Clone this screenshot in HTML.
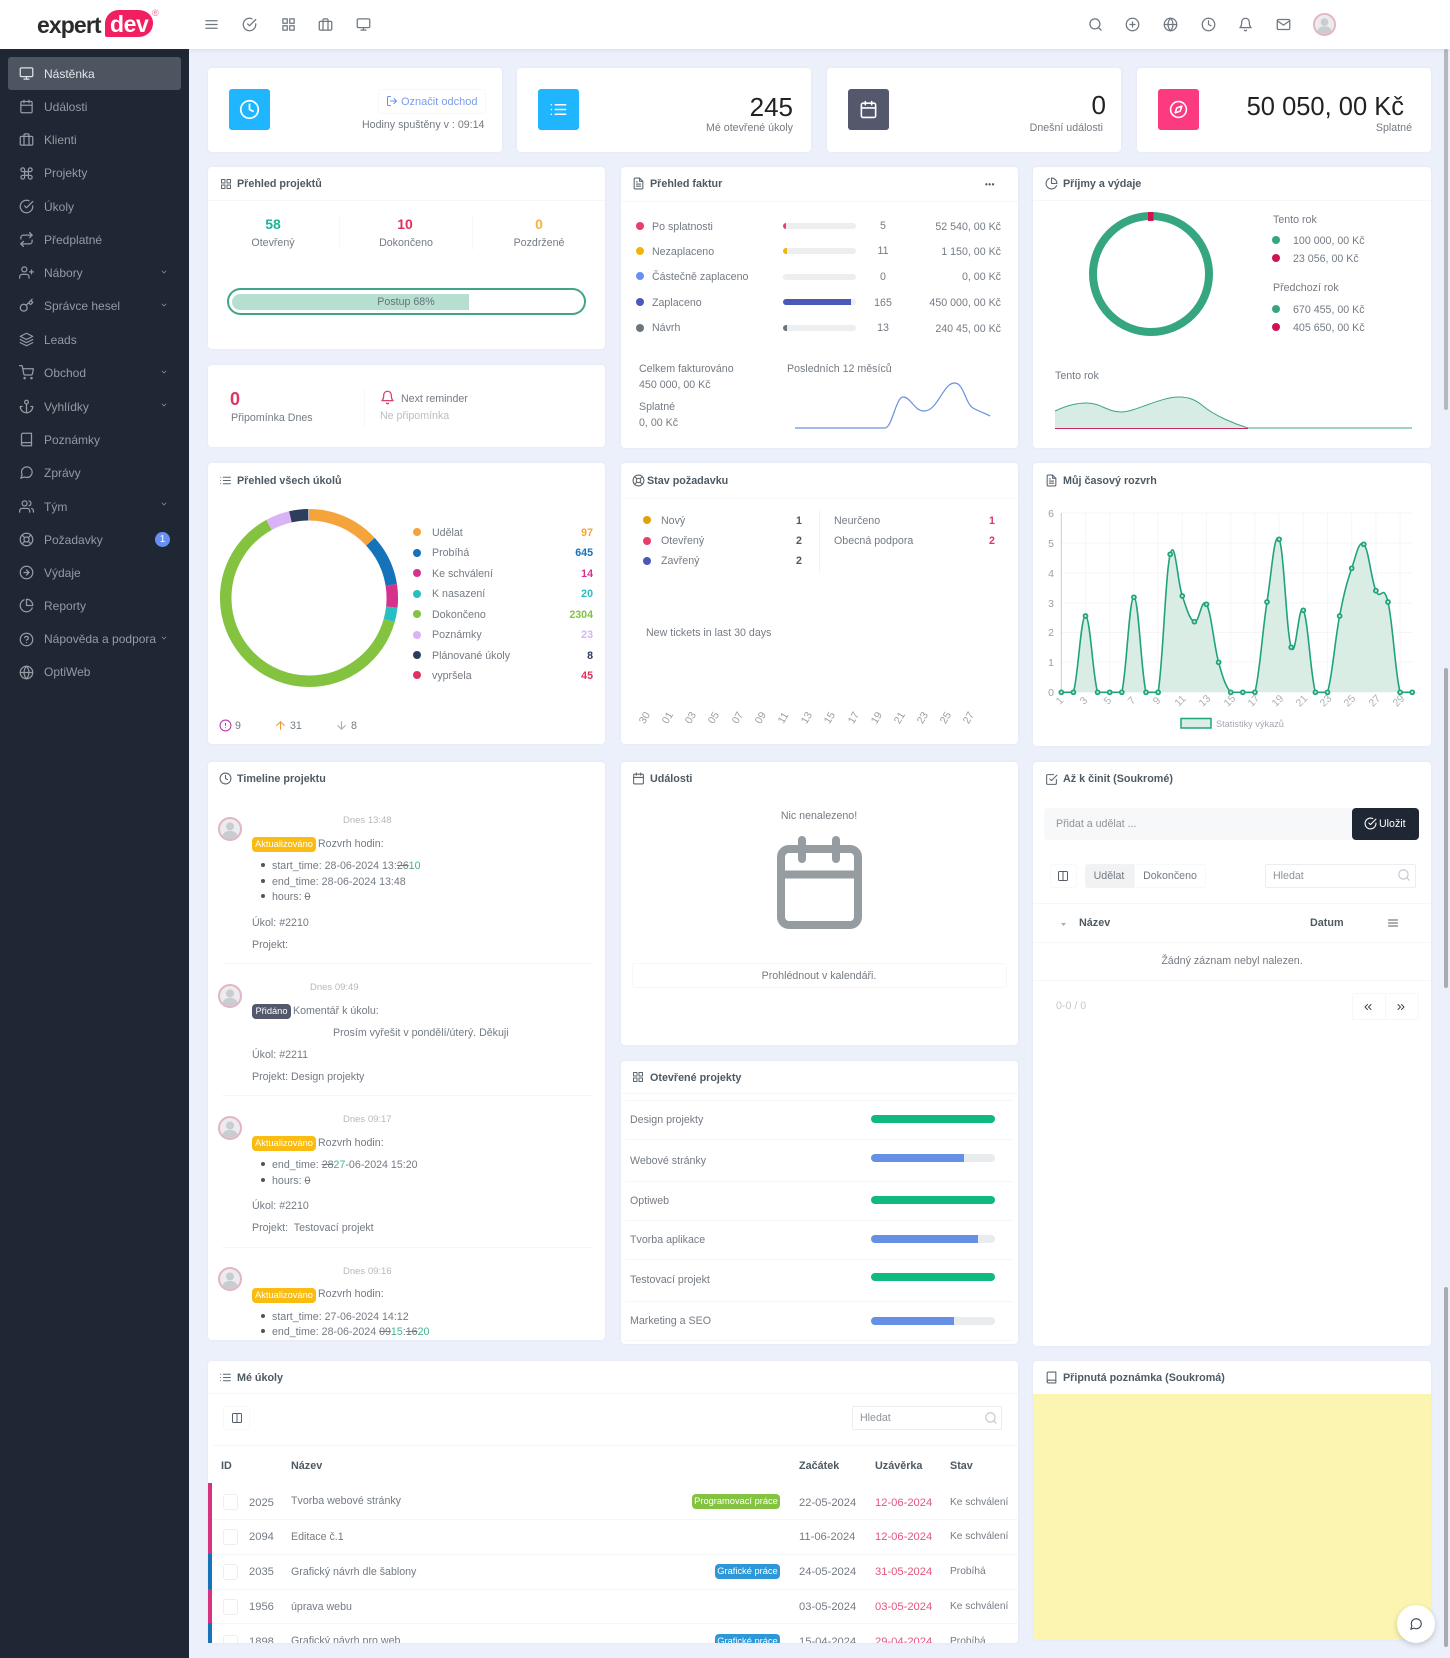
<!DOCTYPE html>
<html lang="cs"><head><meta charset="utf-8"><title>Nástěnka</title>
<style>
html,body{margin:0;padding:0}
body{width:1450px;height:1658px;overflow:hidden;position:relative;background:#ecf0fa;font-family:"Liberation Sans",Arial,sans-serif;font-size:10.65px;color:#747b83}
.a,.t,.i{position:absolute}
.t{white-space:nowrap;line-height:0;margin-top:1px}
.r{transform:translateX(-100%)}.c{transform:translateX(-50%)}
.i{fill:none;stroke:currentColor;stroke-width:2;stroke-linecap:round;stroke-linejoin:round;width:15px;height:15px}
.card{position:absolute;background:#fff;border-radius:4px;box-shadow:0 0 3px rgba(90,100,130,.06)}
.h{font-weight:bold;color:#4d5a63;font-size:10.75px}
.hl{position:absolute;height:1px;background:#f6f7f8}
.t.m{color:#959ba3;font-size:12px;margin-top:0}
.mi{color:#959ba3;width:15px;height:15px;left:19px}
.lb{font-size:10.65px}
b{font-weight:bold}
s{text-decoration:line-through}
.g{color:#45b48f}
.bd{position:absolute;border-radius:4px;color:#fff;font-size:9.3px;height:15px;line-height:15px;text-align:center;white-space:nowrap;margin-top:1px}
.d{position:absolute;border-radius:50%;width:8px;height:8px}
.bar{position:absolute;height:8px;border-radius:4px;background:#e9ecef;left:871px;width:124px;overflow:hidden}
.bar i{display:block;height:100%}
.tk{position:absolute;height:6px;width:73px;left:783px;border-radius:3px;background:#eceef0;overflow:hidden}
.tk i{display:block;height:100%}
.ax{position:absolute;color:#9a9ea3;font-size:10.5px;line-height:0;white-space:nowrap}
.ck{position:absolute;left:223px;width:15px;height:16px;box-sizing:border-box;border:1px solid #eceef0;border-radius:3px;background:#fff}
.n{font-size:11.2px}
.th{font-size:10.8px;color:#4d5a63}
.k{font-size:10.2px}
</style></head><body>
<svg width="0" height="0" style="position:absolute"><defs>
<symbol id="menu" viewBox="0 0 24 24"><path d="M3 12h18M3 6h18M3 18h18"/></symbol>
<symbol id="check" viewBox="0 0 24 24"><path d="M22 11.08V12a10 10 0 1 1-5.93-9.14"/><path d="M22 4 12 14.01l-3-3"/></symbol>
<symbol id="grid" viewBox="0 0 24 24"><rect x="3" y="3" width="7" height="7"/><rect x="14" y="3" width="7" height="7"/><rect x="14" y="14" width="7" height="7"/><rect x="3" y="14" width="7" height="7"/></symbol>
<symbol id="brief" viewBox="0 0 24 24"><rect x="2" y="7" width="20" height="14" rx="2"/><path d="M16 21V5a2 2 0 0 0-2-2h-4a2 2 0 0 0-2 2v16"/></symbol>
<symbol id="monitor" viewBox="0 0 24 24"><rect x="2" y="3" width="20" height="14" rx="2"/><path d="M8 21h8M12 17v4"/></symbol>
<symbol id="cal" viewBox="0 0 24 24"><rect x="3" y="4" width="18" height="18" rx="2"/><path d="M16 2v4M8 2v4M3 10h18"/></symbol>
<symbol id="cmd" viewBox="0 0 24 24"><path d="M18 3a3 3 0 0 0-3 3v12a3 3 0 0 0 3 3 3 3 0 0 0 3-3 3 3 0 0 0-3-3H6a3 3 0 0 0-3 3 3 3 0 0 0 3 3 3 3 0 0 0 3-3V6a3 3 0 0 0-3-3 3 3 0 0 0-3 3 3 3 0 0 0 3 3h12a3 3 0 0 0 3-3 3 3 0 0 0-3-3z"/></symbol>
<symbol id="repeat" viewBox="0 0 24 24"><path d="M17 1l4 4-4 4"/><path d="M3 11V9a4 4 0 0 1 4-4h14"/><path d="M7 23l-4-4 4-4"/><path d="M21 13v2a4 4 0 0 1-4 4H3"/></symbol>
<symbol id="userp" viewBox="0 0 24 24"><path d="M16 21v-2a4 4 0 0 0-4-4H5a4 4 0 0 0-4 4v2"/><circle cx="8.5" cy="7" r="4"/><path d="M20 8v6M23 11h-6"/></symbol>
<symbol id="key" viewBox="0 0 24 24"><path d="M21 2l-2 2m-7.61 7.61a5.5 5.5 0 1 1-7.778 7.778 5.5 5.5 0 0 1 7.777-7.777zm0 0L15.5 7.5m0 0l3 3L22 7l-3-3m-3.5 3.5L19 4"/></symbol>
<symbol id="layers" viewBox="0 0 24 24"><path d="M12 2 2 7l10 5 10-5-10-5z"/><path d="M2 17l10 5 10-5"/><path d="M2 12l10 5 10-5"/></symbol>
<symbol id="cart" viewBox="0 0 24 24"><circle cx="9" cy="21" r="1"/><circle cx="20" cy="21" r="1"/><path d="M1 1h4l2.68 13.39a2 2 0 0 0 2 1.61h9.72a2 2 0 0 0 2-1.61L23 6H6"/></symbol>
<symbol id="anchor" viewBox="0 0 24 24"><circle cx="12" cy="5" r="3"/><path d="M12 22V8"/><path d="M5 12H2a10 10 0 0 0 20 0h-3"/></symbol>
<symbol id="book" viewBox="0 0 24 24"><path d="M4 19.5A2.5 2.5 0 0 1 6.5 17H20"/><path d="M6.5 2H20v20H6.5A2.5 2.5 0 0 1 4 19.5v-15A2.5 2.5 0 0 1 6.5 2z"/></symbol>
<symbol id="msg" viewBox="0 0 24 24"><path d="M21 11.5a8.38 8.38 0 0 1-.9 3.8 8.5 8.5 0 0 1-7.6 4.7 8.38 8.38 0 0 1-3.8-.9L3 21l1.9-5.7a8.38 8.38 0 0 1-.9-3.8 8.5 8.5 0 0 1 4.7-7.6 8.38 8.38 0 0 1 3.8-.9h.5a8.48 8.48 0 0 1 8 8v.5z"/></symbol>
<symbol id="users" viewBox="0 0 24 24"><path d="M17 21v-2a4 4 0 0 0-4-4H5a4 4 0 0 0-4 4v2"/><circle cx="9" cy="7" r="4"/><path d="M23 21v-2a4 4 0 0 0-3-3.87"/><path d="M16 3.13a4 4 0 0 1 0 7.75"/></symbol>
<symbol id="buoy" viewBox="0 0 24 24"><circle cx="12" cy="12" r="10"/><circle cx="12" cy="12" r="4"/><path d="M4.93 4.93l4.24 4.24M14.83 14.83l4.24 4.24M14.83 9.17l4.24-4.24M4.93 19.07l4.24-4.24"/></symbol>
<symbol id="arrc" viewBox="0 0 24 24"><circle cx="12" cy="12" r="10"/><path d="M12 16l4-4-4-4M8 12h8"/></symbol>
<symbol id="pie" viewBox="0 0 24 24"><path d="M21.21 15.89A10 10 0 1 1 8 2.83"/><path d="M22 12A10 10 0 0 0 12 2v10z"/></symbol>
<symbol id="help" viewBox="0 0 24 24"><circle cx="12" cy="12" r="10"/><path d="M9.09 9a3 3 0 0 1 5.83 1c0 2-3 3-3 3M12 17h.01"/></symbol>
<symbol id="globe" viewBox="0 0 24 24"><circle cx="12" cy="12" r="10"/><path d="M2 12h20"/><path d="M12 2a15.3 15.3 0 0 1 4 10 15.3 15.3 0 0 1-4 10 15.3 15.3 0 0 1-4-10 15.3 15.3 0 0 1 4-10z"/></symbol>
<symbol id="search" viewBox="0 0 24 24"><circle cx="11" cy="11" r="8"/><path d="M21 21l-4.35-4.35"/></symbol>
<symbol id="plusc" viewBox="0 0 24 24"><circle cx="12" cy="12" r="10"/><path d="M12 8v8M8 12h8"/></symbol>
<symbol id="clock" viewBox="0 0 24 24"><circle cx="12" cy="12" r="10"/><path d="M12 6v6l4 2"/></symbol>
<symbol id="bell" viewBox="0 0 24 24"><path d="M18 8A6 6 0 0 0 6 8c0 7-3 9-3 9h18s-3-2-3-9"/><path d="M13.73 21a2 2 0 0 1-3.46 0"/></symbol>
<symbol id="mail" viewBox="0 0 24 24"><path d="M4 4h16c1.1 0 2 .9 2 2v12c0 1.1-.9 2-2 2H4c-1.1 0-2-.9-2-2V6c0-1.1.9-2 2-2z"/><path d="M22 6l-10 7L2 6"/></symbol>
<symbol id="list" viewBox="0 0 24 24"><path d="M8 6h13M8 12h13M8 18h13M3 6h.01M3 12h.01M3 18h.01"/></symbol>
<symbol id="file" viewBox="0 0 24 24"><path d="M14 2H6a2 2 0 0 0-2 2v16a2 2 0 0 0 2 2h12a2 2 0 0 0 2-2V8z"/><path d="M14 2v6h6M16 13H8M16 17H8M10 9H8"/></symbol>
<symbol id="compass" viewBox="0 0 24 24"><circle cx="12" cy="12" r="10"/><path d="M16.24 7.76l-2.12 6.36-6.36 2.12 2.12-6.36 6.36-2.12z"/></symbol>
<symbol id="logout" viewBox="0 0 24 24"><path d="M9 21H5a2 2 0 0 1-2-2V5a2 2 0 0 1 2-2h4"/><path d="M16 17l5-5-5-5M21 12H9"/></symbol>
<symbol id="cols" viewBox="0 0 24 24"><path d="M12 3h7a2 2 0 0 1 2 2v14a2 2 0 0 1-2 2h-7m0-18H5a2 2 0 0 0-2 2v14a2 2 0 0 0 2 2h7m0-18v18"/></symbol>
<symbol id="checks" viewBox="0 0 24 24"><path d="M9 11l3 3L22 4"/><path d="M21 12v7a2 2 0 0 1-2 2H5a2 2 0 0 1-2-2V5a2 2 0 0 1 2-2h11"/></symbol>
<symbol id="alert" viewBox="0 0 24 24"><circle cx="12" cy="12" r="10"/><path d="M12 8v4M12 16h.01"/></symbol>
<symbol id="up" viewBox="0 0 24 24"><path d="M12 19V5M5 12l7-7 7 7"/></symbol>
<symbol id="down" viewBox="0 0 24 24"><path d="M12 5v14M19 12l-7 7-7-7"/></symbol>
<symbol id="chev" viewBox="0 0 24 24"><path d="M6 9l6 6 6-6"/></symbol>
<symbol id="chl" viewBox="0 0 24 24"><path d="M11 17l-5-5 5-5M18 17l-5-5 5-5"/></symbol>
<symbol id="chr" viewBox="0 0 24 24"><path d="M13 17l5-5-5-5M6 17l5-5-5-5"/></symbol>
<symbol id="ava" viewBox="0 0 24 24"><circle cx="12" cy="12" r="11" fill="#ececef" stroke="#e3b4c3" stroke-width="2"/><circle cx="12" cy="9.5" r="4" fill="#c9ccd0" stroke="none"/><path d="M4.5 19c1-4 4-5 7.5-5s6.5 1 7.5 5a11 11 0 0 1-15 0z" fill="#c9ccd0" stroke="none"/></symbol>
</defs></svg>

<!-- header -->
<div class="a" style="left:0;top:0;width:1450px;height:49px;background:#fff;box-shadow:0 1px 4px rgba(60,70,100,.12);z-index:3"></div>
<div class="a" style="z-index:4;left:0;top:0;width:1450px;height:49px">
<svg class="a" style="left:104px;top:9px" width="50" height="30"><path d="M15 1H34C43 1 49 7 49 14C49 22 43 28 34 28H3Q1 28 1 26V15C1 7 7 1 15 1Z" fill="#f01f5f"/></svg>
<span class="t" style="left:37px;top:24px;font-size:23px;font-weight:bold;color:#2b2b2e;letter-spacing:-.9px">expert</span>
<span class="t" style="left:110px;top:23px;font-size:23px;font-weight:bold;color:#fff;letter-spacing:-.4px">dev</span>
<span class="t" style="left:152px;top:12px;font-size:9px;color:#f2668f">®</span>
<svg class="i" style="left:204px;top:17px;color:#6f777f"><use href="#menu"/></svg>
<svg class="i" style="left:242px;top:17px;color:#6f777f"><use href="#check"/></svg>
<svg class="i" style="left:281px;top:17px;color:#6f777f"><use href="#grid"/></svg>
<svg class="i" style="left:318px;top:17px;color:#6f777f"><use href="#brief"/></svg>
<svg class="i" style="left:356px;top:17px;color:#6f777f"><use href="#monitor"/></svg>
<svg class="i" style="left:1088px;top:17px;color:#6f777f"><use href="#search"/></svg>
<svg class="i" style="left:1125px;top:17px;color:#6f777f"><use href="#plusc"/></svg>
<svg class="i" style="left:1163px;top:17px;color:#6f777f"><use href="#globe"/></svg>
<svg class="i" style="left:1201px;top:17px;color:#6f777f"><use href="#clock"/></svg>
<svg class="i" style="left:1238px;top:17px;color:#6f777f"><use href="#bell"/></svg>
<svg class="i" style="left:1276px;top:17px;color:#6f777f"><use href="#mail"/></svg>
<svg class="i" style="left:1313px;top:13px;width:23px;height:23px"><use href="#ava"/></svg>
</div>

<!-- sidebar -->
<div class="a" style="left:0;top:49px;width:189px;height:1609px;background:#1f2734;z-index:2">
<div class="a" style="left:8px;top:8px;width:173px;height:33px;background:#4d5560;border-radius:3px"></div>
</div>
<div class="a" style="left:0;top:0;z-index:3;width:189px;height:1658px">
<svg class="i mi" style="top:66px;color:#dfe2e6"><use href="#monitor"/></svg><span class="t m" style="left:44px;top:74px;color:#e3e6ea">Nástěnka</span>
<svg class="i mi" style="top:99px"><use href="#cal"/></svg><span class="t m" style="left:44px;top:107px">Události</span>
<svg class="i mi" style="top:132px"><use href="#brief"/></svg><span class="t m" style="left:44px;top:140px">Klienti</span>
<svg class="i mi" style="top:166px"><use href="#cmd"/></svg><span class="t m" style="left:44px;top:173px">Projekty</span>
<svg class="i mi" style="top:199px"><use href="#check"/></svg><span class="t m" style="left:44px;top:207px">Úkoly</span>
<svg class="i mi" style="top:232px"><use href="#repeat"/></svg><span class="t m" style="left:44px;top:240px">Předplatné</span>
<svg class="i mi" style="top:265px"><use href="#userp"/></svg><span class="t m" style="left:44px;top:273px">Nábory</span>
<svg class="i mi" style="top:298px"><use href="#key"/></svg><span class="t m" style="left:44px;top:306px">Správce hesel</span>
<svg class="i mi" style="top:332px"><use href="#layers"/></svg><span class="t m" style="left:44px;top:340px">Leads</span>
<svg class="i mi" style="top:365px"><use href="#cart"/></svg><span class="t m" style="left:44px;top:373px">Obchod</span>
<svg class="i mi" style="top:399px"><use href="#anchor"/></svg><span class="t m" style="left:44px;top:407px">Vyhlídky</span>
<svg class="i mi" style="top:432px"><use href="#book"/></svg><span class="t m" style="left:44px;top:440px">Poznámky</span>
<svg class="i mi" style="top:465px"><use href="#msg"/></svg><span class="t m" style="left:44px;top:473px">Zprávy</span>
<svg class="i mi" style="top:499px"><use href="#users"/></svg><span class="t m" style="left:44px;top:507px">Tým</span>
<svg class="i mi" style="top:532px"><use href="#buoy"/></svg><span class="t m" style="left:44px;top:540px">Požadavky</span>
<svg class="i mi" style="top:565px"><use href="#arrc"/></svg><span class="t m" style="left:44px;top:573px">Výdaje</span>
<svg class="i mi" style="top:598px"><use href="#pie"/></svg><span class="t m" style="left:44px;top:606px">Reporty</span>
<svg class="i mi" style="top:632px"><use href="#help"/></svg><span class="t m" style="left:44px;top:639px">Nápověda a podpora</span>
<svg class="i mi" style="top:665px"><use href="#globe"/></svg><span class="t m" style="left:44px;top:672px">OptiWeb</span>
<svg class="i" style="left:160px;top:268px;width:8px;height:8px;color:#959ba3"><use href="#chev"/></svg>
<svg class="i" style="left:160px;top:301px;width:8px;height:8px;color:#959ba3"><use href="#chev"/></svg>
<svg class="i" style="left:160px;top:368px;width:8px;height:8px;color:#959ba3"><use href="#chev"/></svg>
<svg class="i" style="left:160px;top:401px;width:8px;height:8px;color:#959ba3"><use href="#chev"/></svg>
<svg class="i" style="left:160px;top:500px;width:8px;height:8px;color:#959ba3"><use href="#chev"/></svg>
<svg class="i" style="left:160px;top:634px;width:8px;height:8px;color:#959ba3"><use href="#chev"/></svg>
<div class="a" style="left:155px;top:532px;width:15px;height:15px;border-radius:50%;background:#6690f4;color:#fff;font-size:10px;line-height:15px;text-align:center">1</div>
</div>

<!-- cards -->
<div class="card" style="left:208px;top:68px;width:294px;height:84px"></div>
<div class="card" style="left:517px;top:68px;width:294px;height:84px"></div>
<div class="card" style="left:827px;top:68px;width:294px;height:84px"></div>
<div class="card" style="left:1137px;top:68px;width:294px;height:84px"></div>
<div class="card" style="left:208px;top:167px;width:397px;height:182px"></div>
<div class="card" style="left:208px;top:365px;width:397px;height:82px"></div>
<div class="card" style="left:621px;top:167px;width:397px;height:281px"></div>
<div class="card" style="left:1033px;top:167px;width:398px;height:281px"></div>
<div class="card" style="left:208px;top:463px;width:397px;height:281px"></div>
<div class="card" style="left:621px;top:463px;width:397px;height:281px"></div>
<div class="card" style="left:1033px;top:463px;width:398px;height:283px"></div>
<div class="card" style="left:208px;top:762px;width:397px;height:578px"></div>
<div class="card" style="left:621px;top:762px;width:397px;height:283px"></div>
<div class="card" style="left:621px;top:1061px;width:397px;height:283px"></div>
<div class="card" style="left:1033px;top:762px;width:398px;height:584px"></div>
<div class="card" style="left:208px;top:1361px;width:810px;height:282px"></div>
<div class="card" style="left:1033px;top:1361px;width:398px;height:279px;overflow:hidden"><div class="a" style="left:0;top:33px;width:398px;height:246px;background:#fcf4b1"></div></div>

<!-- scrollbars -->
<div class="a" style="left:1444px;top:49px;width:4px;height:361px;background:#b5b7bc;border-radius:2px"></div>
<div class="a" style="left:1444px;top:668px;width:4px;height:320px;background:#a9abb0;border-radius:2px"></div>
<div class="a" style="left:1444px;top:1287px;width:4px;height:360px;background:#a9abb0;border-radius:2px"></div>

<!-- top cards -->
<div class="a" style="left:229px;top:89px;width:41px;height:41px;background:#1fb6ff;border-radius:3px"></div>
<svg class="i" style="left:239px;top:99px;width:21px;height:21px;color:#fff"><use href="#clock"/></svg>
<div class="a" style="left:378px;top:89px;width:108px;height:25px;border:1px solid #f6f7f8;box-sizing:border-box;border-radius:3px"></div>
<svg class="i" style="left:386px;top:95px;width:12px;height:12px;color:#6a90e8"><use href="#logout"/></svg>
<span class="t" style="left:401px;top:101px;color:#7d9ce8;font-size:11px">Označit odchod</span>
<span class="t" style="left:362px;top:124px">Hodiny spuštěny v : 09:14</span>

<div class="a" style="left:538px;top:89px;width:41px;height:41px;background:#1fb6ff;border-radius:3px"></div>
<svg class="i" style="left:549px;top:100px;width:19px;height:19px;color:#fff"><use href="#list"/></svg>
<span class="t r" style="left:793px;top:106px;font-size:26px;color:#222">245</span>
<span class="t r" style="left:793px;top:127px">Mé otevřené úkoly</span>

<div class="a" style="left:848px;top:89px;width:41px;height:41px;background:#54586c;border-radius:3px"></div>
<svg class="i" style="left:859px;top:100px;width:19px;height:19px;color:#fff"><use href="#cal"/></svg>
<span class="t r" style="left:1106px;top:104px;font-size:26px;color:#222">0</span>
<span class="t r" style="left:1103px;top:127px">Dnešní události</span>

<div class="a" style="left:1158px;top:89px;width:41px;height:41px;background:#fb3a7f;border-radius:3px"></div>
<svg class="i" style="left:1169px;top:100px;width:19px;height:19px;color:#fff"><use href="#compass"/></svg>
<span class="t r" style="left:1404px;top:106px;font-size:25.5px;color:#222">50 050, 00 Kč</span>
<span class="t r" style="left:1412px;top:127px">Splatné</span>

<!-- project overview -->
<svg class="i" style="left:220px;top:178px;width:12px;height:12px;color:#5c6770"><use href="#grid"/></svg>
<span class="t h" style="left:237px;top:183px">Přehled projektů</span>
<div class="hl" style="left:208px;top:200px;width:397px"></div>
<span class="t c" style="left:273px;top:223px;font-size:14px;font-weight:bold;color:#1fb594">58</span>
<span class="t c" style="left:273px;top:242px">Otevřený</span>
<span class="t c" style="left:405px;top:223px;font-size:14px;font-weight:bold;color:#dc2f5f">10</span>
<span class="t c" style="left:406px;top:242px">Dokončeno</span>
<span class="t c" style="left:539px;top:223px;font-size:14px;font-weight:bold;color:#f5b23c">0</span>
<span class="t c" style="left:539px;top:242px">Pozdržené</span>
<div class="a" style="left:339px;top:216px;width:1px;height:34px;background:#f7f8f9"></div>
<div class="a" style="left:472px;top:216px;width:1px;height:34px;background:#f7f8f9"></div>
<div class="a" style="left:227px;top:288px;width:359px;height:27px;box-sizing:border-box;border:2px solid #3fa584;border-radius:14px"></div>
<div class="a" style="left:232px;top:294px;width:237px;height:16px;background:#b6dfcf;border-radius:8px 0 0 8px"></div>
<span class="t c" style="left:406px;top:301px;color:#66727a">Postup 68%</span>

<!-- reminder -->
<span class="t" style="left:230px;top:398px;font-size:18px;font-weight:bold;color:#dc3464">0</span>
<span class="t" style="left:231px;top:417px">Připomínka Dnes</span>
<div class="a" style="left:364px;top:388px;width:1px;height:40px;background:#f7f8f9"></div>
<svg class="i" style="left:380px;top:390px;width:15px;height:15px;color:#dc3f6d"><use href="#bell"/></svg>
<span class="t" style="left:401px;top:398px">Next reminder</span>
<span class="t" style="left:380px;top:415px;color:#b9bdc2">Ne připomínka</span>

<!-- invoices -->
<svg class="i" style="left:632px;top:177px;width:13px;height:13px;color:#5c6770"><use href="#file"/></svg>
<span class="t h" style="left:650px;top:183px">Přehled faktur</span>
<span class="t" style="left:985px;top:184px;font-weight:bold;font-size:8px;letter-spacing:.5px;color:#4d5a63">•••</span>
<div class="hl" style="left:621px;top:201px;width:397px"></div>
<div class="d" style="left:636px;top:222px;background:#e83e6c"></div><span class="t lb" style="left:652px;top:226px">Po splatnosti</span>
<div class="d" style="left:636px;top:247px;background:#f1b40f"></div><span class="t lb" style="left:652px;top:251px">Nezaplaceno</span>
<div class="d" style="left:636px;top:272px;background:#6690f4"></div><span class="t lb" style="left:652px;top:276px">Částečně zaplaceno</span>
<div class="d" style="left:636px;top:298px;background:#4a58b8"></div><span class="t lb" style="left:652px;top:302px">Zaplaceno</span>
<div class="d" style="left:636px;top:324px;background:#6c757d"></div><span class="t lb" style="left:652px;top:327px">Návrh</span>
<div class="tk" style="top:223px"><i style="width:3px;background:#e83e6c"></i></div>
<div class="tk" style="top:248px"><i style="width:4px;background:#f1b40f"></i></div>
<div class="tk" style="top:274px"></div>
<div class="tk" style="top:299px"><i style="width:68px;background:#4a58b8"></i></div>
<div class="tk" style="top:325px"><i style="width:4px;background:#6c757d"></i></div>
<span class="t c" style="left:883px;top:225px">5</span>
<span class="t c" style="left:883px;top:250px">11</span>
<span class="t c" style="left:883px;top:276px">0</span>
<span class="t c" style="left:883px;top:302px">165</span>
<span class="t c" style="left:883px;top:327px">13</span>
<span class="t r" style="left:1001px;top:226px">52 540, 00 Kč</span>
<span class="t r" style="left:1001px;top:251px">1 150, 00 Kč</span>
<span class="t r" style="left:1001px;top:276px">0, 00 Kč</span>
<span class="t r" style="left:1001px;top:302px">450 000, 00 Kč</span>
<span class="t r" style="left:1001px;top:328px">240 45, 00 Kč</span>
<span class="t" style="left:639px;top:368px">Celkem fakturováno</span>
<span class="t" style="left:639px;top:384px">450 000, 00 Kč</span>
<span class="t" style="left:639px;top:406px">Splatné</span>
<span class="t" style="left:639px;top:422px">0, 00 Kč</span>
<span class="t" style="left:787px;top:368px">Posledních 12 měsíců</span>

<!-- income -->
<svg class="i" style="left:1045px;top:177px;width:13px;height:13px;color:#5c6770"><use href="#pie"/></svg>
<span class="t h" style="left:1063px;top:183px">Příjmy a výdaje</span>
<div class="hl" style="left:1033px;top:200px;width:398px"></div>
<span class="t" style="left:1273px;top:219px">Tento rok</span>
<div class="d" style="left:1272px;top:236px;background:#36a581"></div><span class="t" style="left:1293px;top:240px">100 000, 00 Kč</span>
<div class="d" style="left:1272px;top:254px;background:#d1134f"></div><span class="t" style="left:1293px;top:258px">23 056, 00 Kč</span>
<span class="t" style="left:1273px;top:287px">Předchozí rok</span>
<div class="d" style="left:1272px;top:305px;background:#36a581"></div><span class="t" style="left:1293px;top:309px">670 455, 00 Kč</span>
<div class="d" style="left:1272px;top:323px;background:#d1134f"></div><span class="t" style="left:1293px;top:327px">405 650, 00 Kč</span>
<span class="t" style="left:1055px;top:375px">Tento rok</span>

<!-- overall charts -->
<svg class="a" style="left:0;top:0" width="1450" height="1658" viewBox="0 0 1450 1658" fill="none">
 <path d="M795 428H885C892 428 896 397 903 397C911 397 914 411 924 411C938 411 943 383 954.5 383C964 383 965 403 973 408C980 412 985 413 990 416" stroke="#6a90e0" stroke-width="1.2"/>
 <circle cx="1151" cy="274" r="58" stroke="#36a581" stroke-width="8"/>
 <rect x="1148" y="212" width="5.5" height="9" fill="#d1134f"/>
 <path d="M1055 411C1068 405 1077 403 1087 403C1100 403 1108 412 1121 412C1135 412 1160 397 1179 397C1189 397 1196 400 1203 406C1215 416 1235 424 1248 428H1055Z" fill="#d7ece4"/>
 <path d="M1055 411C1068 405 1077 403 1087 403C1100 403 1108 412 1121 412C1135 412 1160 397 1179 397C1189 397 1196 400 1203 406C1215 416 1235 424 1248 428H1412" stroke="#3fa583" stroke-width="1"/>
 <path d="M1055 428.5H1248" stroke="#c8285a" stroke-width="1"/>
 <!-- tasks donut -->
 <g transform="rotate(-90 309 598)" stroke-width="11.5">
  <circle cx="309" cy="598" r="83.3" pathLength="360" stroke="#f5a33b" stroke-dasharray="47.6 360"/>
  <circle cx="309" cy="598" r="83.3" pathLength="360" stroke="#1672b9" stroke-dasharray="33.4 360" stroke-dashoffset="-47.6"/>
  <circle cx="309" cy="598" r="83.3" pathLength="360" stroke="#d6328c" stroke-dasharray="15.4 360" stroke-dashoffset="-81"/>
  <circle cx="309" cy="598" r="83.3" pathLength="360" stroke="#27bfc4" stroke-dasharray="9.4 360" stroke-dashoffset="-96.4"/>
  <circle cx="309" cy="598" r="83.3" pathLength="360" stroke="#83c340" stroke-dasharray="225.9 360" stroke-dashoffset="-105.8"/>
  <circle cx="309" cy="598" r="83.3" pathLength="360" stroke="#d9b3f5" stroke-dasharray="15.8 360" stroke-dashoffset="-331.7"/>
  <circle cx="309" cy="598" r="83.3" pathLength="360" stroke="#2c3e5c" stroke-dasharray="12.5 360" stroke-dashoffset="-347.5"/>
 </g>
 <!-- timesheet grid -->
 <path d="M1061 513H1412M1061 543H1412M1061 573H1412M1061 603H1412M1061 632.5H1412M1061 662H1412" stroke="#f5f5f6"/>
 <path d="M1085.5 513V692M1109.7 513V692M1133.9 513V692M1158.1 513V692M1182.3 513V692M1206.5 513V692M1230.7 513V692M1254.9 513V692M1279.1 513V692M1303.3 513V692M1327.5 513V692M1351.7 513V692M1375.9 513V692M1400.1 513V692" stroke="#f6f6f7"/>
 <path d="M1061.3 513V692.3" stroke="#c9cbce"/>
 <g transform="translate(1061.3 692.3)">
  <path d="M0 0L12.1 0C16.9 -15.3 19.4 -76.3 24.2 -76.3C29 -76.3 31.5 -15.3 36.3 0L60.5 0C65.3 -19 67.8 -95 72.6 -95C77.4 -95 79.9 -19 84.7 0L96.8 0C101.6 -27.6 104.1 -118.7 108.9 -138C113.7 -157.3 116.2 -109.8 121 -96.3C125.8 -82.8 128.3 -72.3 133.1 -70.6C137.9 -68.9 140.4 -96.1 145.2 -88C150 -79.9 152.5 -47.6 157.3 -30C162.1 -12.4 164.6 -6 169.4 0L193.6 0C198.4 -18 200.9 -59.7 205.7 -90.3C210.5 -120.9 213 -162 217.8 -153C222.6 -144 225.1 -59.2 229.9 -45C234.7 -30.8 237.2 -91 242 -82C246.8 -73 249.3 -16.4 254.1 0L266.2 0C271 -15.3 273.5 -51.5 278.3 -76.3C283.1 -101.1 285.6 -109.7 290.4 -124C295.2 -138.3 297.7 -152.5 302.5 -148C307.3 -143.5 309.8 -113.1 314.6 -101.6C319.4 -90.1 321.9 -110.6 326.7 -90.3C331.5 -70 334 -18 338.8 0L350.9 0" fill="#d9ede5" stroke="#1fa37c" stroke-width="1.6"/>
  <g fill="#c6e5d9" stroke="#1fa37c" stroke-width="1.7">
  <circle cx="0" cy="0" r="2"/><circle cx="12.1" cy="0" r="2"/><circle cx="24.2" cy="-76.3" r="2"/><circle cx="36.3" cy="0" r="2"/><circle cx="48.4" cy="0" r="2"/><circle cx="60.5" cy="0" r="2"/><circle cx="72.6" cy="-95" r="2"/><circle cx="84.7" cy="0" r="2"/><circle cx="96.8" cy="0" r="2"/><circle cx="108.9" cy="-138" r="2"/><circle cx="121" cy="-96.3" r="2"/><circle cx="133.1" cy="-70.6" r="2"/><circle cx="145.2" cy="-88" r="2"/><circle cx="157.3" cy="-30" r="2"/><circle cx="169.4" cy="0" r="2"/><circle cx="181.5" cy="0" r="2"/><circle cx="193.6" cy="0" r="2"/><circle cx="205.7" cy="-90.3" r="2"/><circle cx="217.8" cy="-153" r="2"/><circle cx="229.9" cy="-45" r="2"/><circle cx="242" cy="-82" r="2"/><circle cx="254.1" cy="0" r="2"/><circle cx="266.2" cy="0" r="2"/><circle cx="278.3" cy="-76.3" r="2"/><circle cx="290.4" cy="-124" r="2"/><circle cx="302.5" cy="-148" r="2"/><circle cx="314.6" cy="-101.6" r="2"/><circle cx="326.7" cy="-90.3" r="2"/><circle cx="338.8" cy="0" r="2"/><circle cx="350.9" cy="0" r="2"/>
  </g>
 </g>
 <rect x="1181" y="718.5" width="30" height="9.5" fill="#d9ede5" stroke="#1fa37c" stroke-width="1.5"/>
</svg>

<!-- tasks overview -->
<svg class="i" style="left:219px;top:474px;width:13px;height:13px;color:#5c6770"><use href="#list"/></svg>
<span class="t h" style="left:237px;top:480px">Přehled všech úkolů</span>
<div class="d" style="left:413px;top:528px;background:#f5a33b"></div><span class="t lb" style="left:432px;top:532px">Udělat</span><b class="t r" style="left:593px;top:532px;color:#f5a33b">97</b>
<div class="d" style="left:413px;top:549px;background:#1672b9"></div><span class="t lb" style="left:432px;top:552px">Probíhá</span><b class="t r" style="left:593px;top:552px;color:#1672b9">645</b>
<div class="d" style="left:413px;top:569px;background:#d6328c"></div><span class="t lb" style="left:432px;top:573px">Ke schválení</span><b class="t r" style="left:593px;top:573px;color:#d6328c">14</b>
<div class="d" style="left:413px;top:590px;background:#27bfc4"></div><span class="t lb" style="left:432px;top:593px">K nasazení</span><b class="t r" style="left:593px;top:593px;color:#27bfc4">20</b>
<div class="d" style="left:413px;top:610px;background:#83c340"></div><span class="t lb" style="left:432px;top:614px">Dokončeno</span><b class="t r" style="left:593px;top:614px;color:#83c340">2304</b>
<div class="d" style="left:413px;top:631px;background:#d9b3f5"></div><span class="t lb" style="left:432px;top:634px">Poznámky</span><b class="t r" style="left:593px;top:634px;color:#d9b3f5">23</b>
<div class="d" style="left:413px;top:651px;background:#2c3e5c"></div><span class="t lb" style="left:432px;top:655px">Plánované úkoly</span><b class="t r" style="left:593px;top:655px;color:#2c3e5c">8</b>
<div class="d" style="left:413px;top:671px;background:#e2305f"></div><span class="t lb" style="left:432px;top:675px">vypršela</span><b class="t r" style="left:593px;top:675px;color:#e2305f">45</b>
<svg class="i" style="left:219px;top:719px;width:13px;height:13px;color:#b83aa8"><use href="#alert"/></svg><span class="t" style="left:235px;top:725px">9</span>
<svg class="i" style="left:274px;top:719px;width:13px;height:13px;color:#f0982e"><use href="#up"/></svg><span class="t" style="left:290px;top:725px">31</span>
<svg class="i" style="left:335px;top:719px;width:13px;height:13px;color:#a8adb3"><use href="#down"/></svg><span class="t" style="left:351px;top:725px">8</span>

<!-- tickets -->
<svg class="i" style="left:632px;top:474px;width:13px;height:13px;color:#5c6770"><use href="#buoy"/></svg>
<span class="t h" style="left:647px;top:480px">Stav požadavku</span>
<div class="hl" style="left:621px;top:498px;width:397px;background:#f9fafb"></div>
<div class="d" style="left:643px;top:516px;background:#dfa20a"></div><span class="t lb" style="left:661px;top:520px">Nový</span><b class="t c" style="left:799px;top:520px;color:#4d5a63">1</b>
<div class="d" style="left:643px;top:537px;background:#e83e6c"></div><span class="t lb" style="left:661px;top:540px">Otevřený</span><b class="t c" style="left:799px;top:540px;color:#4d5a63">2</b>
<div class="d" style="left:643px;top:557px;background:#4a58b8"></div><span class="t lb" style="left:661px;top:560px">Zavřený</span><b class="t c" style="left:799px;top:560px;color:#4d5a63">2</b>
<div class="a" style="left:819px;top:510px;width:1px;height:62px;background:#f2f3f5"></div>
<span class="t lb" style="left:834px;top:520px">Neurčeno</span><b class="t c" style="left:992px;top:520px;color:#dc3464">1</b>
<span class="t lb" style="left:834px;top:540px">Obecná podpora</span><b class="t c" style="left:992px;top:540px;color:#dc3464">2</b>
<span class="t lb" style="left:646px;top:632px">New tickets in last 30 days</span>
<span class="ax" style="left:639px;top:718px;transform:rotate(-60deg)">30</span><span class="ax" style="left:662px;top:718px;transform:rotate(-60deg)">01</span><span class="ax" style="left:685px;top:718px;transform:rotate(-60deg)">03</span><span class="ax" style="left:708px;top:718px;transform:rotate(-60deg)">05</span><span class="ax" style="left:732px;top:718px;transform:rotate(-60deg)">07</span><span class="ax" style="left:755px;top:718px;transform:rotate(-60deg)">09</span><span class="ax" style="left:778px;top:718px;transform:rotate(-60deg)">11</span><span class="ax" style="left:801px;top:718px;transform:rotate(-60deg)">13</span><span class="ax" style="left:824px;top:718px;transform:rotate(-60deg)">15</span><span class="ax" style="left:848px;top:718px;transform:rotate(-60deg)">17</span><span class="ax" style="left:871px;top:718px;transform:rotate(-60deg)">19</span><span class="ax" style="left:894px;top:718px;transform:rotate(-60deg)">21</span><span class="ax" style="left:917px;top:718px;transform:rotate(-60deg)">23</span><span class="ax" style="left:940px;top:718px;transform:rotate(-60deg)">25</span><span class="ax" style="left:963px;top:718px;transform:rotate(-60deg)">27</span>

<!-- timesheet -->
<svg class="i" style="left:1045px;top:474px;width:13px;height:13px;color:#5c6770"><use href="#file"/></svg>
<span class="t h" style="left:1063px;top:480px">Můj časový rozvrh</span>
<span class="ax c" style="left:1051px;top:514px">6</span><span class="ax c" style="left:1051px;top:544px">5</span><span class="ax c" style="left:1051px;top:574px">4</span><span class="ax c" style="left:1051px;top:604px">3</span><span class="ax c" style="left:1051px;top:633px">2</span><span class="ax c" style="left:1051px;top:663px">1</span><span class="ax c" style="left:1051px;top:693px">0</span>
<span class="ax" style="left:1057px;top:701px;transform:rotate(-45deg);color:#aeb2b6">1</span><span class="ax" style="left:1081px;top:701px;transform:rotate(-45deg);color:#aeb2b6">3</span><span class="ax" style="left:1105px;top:701px;transform:rotate(-45deg);color:#aeb2b6">5</span><span class="ax" style="left:1129px;top:701px;transform:rotate(-45deg);color:#aeb2b6">7</span><span class="ax" style="left:1154px;top:701px;transform:rotate(-45deg);color:#aeb2b6">9</span><span class="ax" style="left:1175px;top:701px;transform:rotate(-45deg);color:#aeb2b6">11</span><span class="ax" style="left:1199px;top:701px;transform:rotate(-45deg);color:#aeb2b6">13</span><span class="ax" style="left:1224px;top:701px;transform:rotate(-45deg);color:#aeb2b6">15</span><span class="ax" style="left:1248px;top:701px;transform:rotate(-45deg);color:#aeb2b6">17</span><span class="ax" style="left:1272px;top:701px;transform:rotate(-45deg);color:#aeb2b6">19</span><span class="ax" style="left:1296px;top:701px;transform:rotate(-45deg);color:#aeb2b6">21</span><span class="ax" style="left:1320px;top:701px;transform:rotate(-45deg);color:#aeb2b6">23</span><span class="ax" style="left:1344px;top:701px;transform:rotate(-45deg);color:#aeb2b6">25</span><span class="ax" style="left:1369px;top:701px;transform:rotate(-45deg);color:#aeb2b6">27</span><span class="ax" style="left:1393px;top:701px;transform:rotate(-45deg);color:#aeb2b6">29</span>
<span class="t" style="left:1216px;top:723px;font-size:9.2px;color:#a4a8b0">Statistiky výkazů</span>

<!-- timeline -->
<svg class="i" style="left:219px;top:772px;width:13px;height:13px;color:#5c6770"><use href="#clock"/></svg>
<span class="t h" style="left:237px;top:778px">Timeline projektu</span>
<div class="a" style="left:0;top:0;width:610px;height:1339px;overflow:hidden">
<svg class="i" style="left:218px;top:817px;width:24px;height:24px"><use href="#ava"/></svg>
<span class="t" style="left:343px;top:820px;font-size:9.5px;color:#b4b8bd">Dnes 13:48</span>
<div class="bd" style="left:252px;top:836px;width:64px;background:#fbbc12">Aktualizováno</div><span class="t" style="left:318px;top:843px">Rozvrh hodin:</span>
<div class="d" style="left:261px;top:863px;width:4px;height:4px;background:#555"></div><span class="t" style="left:272px;top:865px">start_time: 28-06-2024 13:<s>26</s><span class="g">10</span></span>
<div class="d" style="left:261px;top:879px;width:4px;height:4px;background:#555"></div><span class="t" style="left:272px;top:881px">end_time: 28-06-2024 13:48</span>
<div class="d" style="left:261px;top:894px;width:4px;height:4px;background:#555"></div><span class="t" style="left:272px;top:896px">hours: <s>0</s></span>
<span class="t" style="left:252px;top:922px">Úkol: #2210</span>
<span class="t" style="left:252px;top:944px">Projekt:</span>
<div class="hl" style="left:222px;top:963px;width:370px"></div>

<svg class="i" style="left:218px;top:984px;width:24px;height:24px"><use href="#ava"/></svg>
<span class="t" style="left:310px;top:987px;font-size:9.5px;color:#b4b8bd">Dnes 09:49</span>
<div class="bd" style="left:252px;top:1003px;width:39px;background:#54586c">Přidáno</div><span class="t" style="left:293px;top:1010px">Komentář k úkolu:</span>
<span class="t" style="left:333px;top:1032px">Prosím vyřešit v pondělí/úterý. Děkuji</span>
<span class="t" style="left:252px;top:1054px">Úkol: #2211</span>
<span class="t" style="left:252px;top:1076px">Projekt: Design projekty</span>
<div class="hl" style="left:222px;top:1095px;width:370px"></div>

<svg class="i" style="left:218px;top:1116px;width:24px;height:24px"><use href="#ava"/></svg>
<span class="t" style="left:343px;top:1119px;font-size:9.5px;color:#b4b8bd">Dnes 09:17</span>
<div class="bd" style="left:252px;top:1135px;width:64px;background:#fbbc12">Aktualizováno</div><span class="t" style="left:318px;top:1142px">Rozvrh hodin:</span>
<div class="d" style="left:261px;top:1162px;width:4px;height:4px;background:#555"></div><span class="t" style="left:272px;top:1164px">end_time: <s>28</s><span class="g">27</span>-06-2024 15:20</span>
<div class="d" style="left:261px;top:1178px;width:4px;height:4px;background:#555"></div><span class="t" style="left:272px;top:1180px">hours: <s>0</s></span>
<span class="t" style="left:252px;top:1205px">Úkol: #2210</span>
<span class="t" style="left:252px;top:1227px">Projekt:&nbsp; Testovací projekt</span>
<div class="hl" style="left:222px;top:1247px;width:370px"></div>

<svg class="i" style="left:218px;top:1267px;width:24px;height:24px"><use href="#ava"/></svg>
<span class="t" style="left:343px;top:1271px;font-size:9.5px;color:#b4b8bd">Dnes 09:16</span>
<div class="bd" style="left:252px;top:1287px;width:64px;background:#fbbc12">Aktualizováno</div><span class="t" style="left:318px;top:1293px">Rozvrh hodin:</span>
<div class="d" style="left:261px;top:1314px;width:4px;height:4px;background:#555"></div><span class="t" style="left:272px;top:1316px">start_time: 27-06-2024 14:12</span>
<div class="d" style="left:261px;top:1329px;width:4px;height:4px;background:#555"></div><span class="t" style="left:272px;top:1331px">end_time: 28-06-2024 <s>09</s><span class="g">15</span>:<s>16</s><span class="g">20</span></span>
</div>

<!-- events -->
<svg class="i" style="left:632px;top:772px;width:13px;height:13px;color:#5c6770"><use href="#cal"/></svg>
<span class="t h" style="left:650px;top:778px">Události</span>
<span class="t c" style="left:819px;top:815px">Nic nenalezeno!</span>
<svg class="a" style="left:777px;top:836px" width="85" height="93" viewBox="0 0 85 93" fill="none" stroke="#959da1" stroke-width="8" stroke-linecap="round"><rect x="4" y="13" width="77" height="76" rx="8"/><path d="M2 38.5H83" stroke-linecap="butt"/><path d="M25 4V23M59 4V23" stroke-width="8"/></svg>
<div class="a" style="left:632px;top:963px;width:375px;height:25px;border:1px solid #f6f7f8;box-sizing:border-box;border-radius:3px"></div>
<span class="t c" style="left:819px;top:975px">Prohlédnout v kalendáři.</span>

<!-- open projects -->
<svg class="i" style="left:632px;top:1071px;width:12px;height:12px;color:#5c6770"><use href="#grid"/></svg>
<span class="t h" style="left:650px;top:1077px">Otevřené projekty</span>
<div class="hl" style="left:621px;top:1093px;width:397px"></div>
<div class="hl" style="left:625px;top:1100px;width:388px"></div>
<div class="hl" style="left:625px;top:1139px;width:388px"></div>
<div class="hl" style="left:625px;top:1181px;width:388px"></div>
<div class="hl" style="left:625px;top:1220px;width:388px"></div>
<div class="hl" style="left:625px;top:1259px;width:388px"></div>
<div class="hl" style="left:625px;top:1301px;width:388px"></div>
<div class="hl" style="left:625px;top:1340px;width:388px"></div>
<span class="t" style="left:630px;top:1119px">Design projekty</span>
<span class="t" style="left:630px;top:1160px">Webové stránky</span>
<span class="t" style="left:630px;top:1200px">Optiweb</span>
<span class="t" style="left:630px;top:1239px">Tvorba aplikace</span>
<span class="t" style="left:630px;top:1279px">Testovací projekt</span>
<span class="t" style="left:630px;top:1320px">Marketing a SEO</span>
<div class="bar" style="top:1115px"><i style="width:100%;background:#10b981"></i></div>
<div class="bar" style="top:1154px"><i style="width:75%;background:#6690e6"></i></div>
<div class="bar" style="top:1196px"><i style="width:100%;background:#10b981"></i></div>
<div class="bar" style="top:1235px"><i style="width:86%;background:#6690e6"></i></div>
<div class="bar" style="top:1273px"><i style="width:100%;background:#10b981"></i></div>
<div class="bar" style="top:1317px"><i style="width:67%;background:#6690e6"></i></div>

<!-- todo -->
<svg class="i" style="left:1045px;top:773px;width:13px;height:13px;color:#5c6770"><use href="#checks"/></svg>
<span class="t h" style="left:1063px;top:778px">Až k činit (Soukromé)</span>
<div class="a" style="left:1044px;top:808px;width:310px;height:32px;background:#f7f8f9;border-radius:4px 0 0 4px"></div>
<span class="t" style="left:1056px;top:823px;color:#8f959b">Přidat a udělat ...</span>
<div class="a" style="left:1352px;top:808px;width:67px;height:32px;background:#1f2734;border-radius:4px"></div>
<svg class="i" style="left:1364px;top:817px;width:13px;height:13px;color:#fff"><use href="#check"/></svg>
<span class="t" style="left:1379px;top:823px;color:#fff">Uložit</span>
<div class="a" style="left:1050px;top:864px;width:27px;height:24px;border:1px solid #f7f8f9;box-sizing:border-box;border-radius:3px"></div>
<svg class="i" style="left:1057px;top:870px;width:12px;height:12px;color:#555e66"><use href="#cols"/></svg>
<div class="a" style="left:1085px;top:864px;width:49px;height:24px;background:#f1f2f4;border-radius:3px 0 0 3px"></div>
<div class="a" style="left:1134px;top:864px;width:72px;height:24px;border:1px solid #f7f8f9;box-sizing:border-box;border-radius:0 3px 3px 0"></div>
<span class="t c" style="left:1109px;top:875px">Udělat</span>
<span class="t c" style="left:1170px;top:875px">Dokončeno</span>
<div class="a" style="left:1265px;top:864px;width:151px;height:24px;border:1px solid #ebedf0;box-sizing:border-box;border-radius:2px"></div>
<span class="t" style="left:1273px;top:875px;color:#8f959b">Hledat</span>
<svg class="i" style="left:1397px;top:868px;width:14px;height:14px;color:#c4c8cc"><use href="#search"/></svg>
<div class="hl" style="left:1033px;top:903px;width:398px"></div>
<svg class="a" style="left:1060px;top:921px" width="7" height="6"><path d="M1 2h5L3.5 5z" fill="#a9adb2"/></svg>
<b class="t th" style="left:1079px;top:922px">Název</b>
<b class="t th" style="left:1310px;top:922px">Datum</b>
<svg class="i" style="left:1387px;top:917px;width:12px;height:12px;color:#555e66"><use href="#menu"/></svg>
<div class="hl" style="left:1033px;top:942px;width:398px"></div>
<span class="t c" style="left:1232px;top:960px">Žádný záznam nebyl nalezen.</span>
<div class="hl" style="left:1033px;top:980px;width:398px"></div>
<span class="t" style="left:1056px;top:1005px;color:#c5c8cc">0-0 / 0</span>
<div class="a" style="left:1352px;top:993px;width:67px;height:27px;border:1px solid #f6f7f8;box-sizing:border-box;border-radius:2px"></div>
<div class="a" style="left:1385px;top:993px;width:1px;height:27px;background:#f6f7f8"></div>
<svg class="i" style="left:1362px;top:1001px;width:12px;height:12px;color:#3f4850"><use href="#chl"/></svg>
<svg class="i" style="left:1395px;top:1001px;width:12px;height:12px;color:#3f4850"><use href="#chr"/></svg>

<!-- my tasks -->
<svg class="i" style="left:219px;top:1371px;width:13px;height:13px;color:#5c6770"><use href="#list"/></svg>
<span class="t h" style="left:237px;top:1377px">Mé úkoly</span>
<div class="hl" style="left:208px;top:1393px;width:810px"></div>
<div class="a" style="left:223px;top:1406px;width:27px;height:24px;border:1px solid #f7f8f9;box-sizing:border-box;border-radius:3px"></div>
<svg class="i" style="left:231px;top:1412px;width:12px;height:12px;color:#555e66"><use href="#cols"/></svg>
<div class="a" style="left:852px;top:1406px;width:150px;height:24px;border:1px solid #ebedf0;box-sizing:border-box;border-radius:2px"></div>
<span class="t" style="left:860px;top:1417px;color:#8f959b">Hledat</span>
<svg class="i" style="left:984px;top:1411px;width:14px;height:14px;color:#c4c8cc"><use href="#search"/></svg>
<div class="hl" style="left:212px;top:1445px;width:806px"></div>
<b class="t th" style="left:221px;top:1465px">ID</b>
<b class="t th" style="left:291px;top:1465px">Název</b>
<b class="t th" style="left:799px;top:1465px">Začátek</b>
<b class="t th" style="left:875px;top:1465px">Uzávěrka</b>
<b class="t th" style="left:950px;top:1465px">Stav</b>
<div class="a" style="left:0;top:0;width:1030px;height:1643px;overflow:hidden">
<div class="a" style="left:208px;top:1483px;width:4px;height:71px;background:#d6337f"></div>
<div class="a" style="left:208px;top:1554px;width:4px;height:35px;background:#1672b9"></div>
<div class="a" style="left:208px;top:1589px;width:4px;height:34px;background:#d6337f"></div>
<div class="a" style="left:208px;top:1623px;width:4px;height:25px;background:#1672b9"></div>
<div class="hl" style="left:212px;top:1519px;width:806px"></div>
<div class="hl" style="left:212px;top:1554px;width:806px"></div>
<div class="hl" style="left:212px;top:1589px;width:806px"></div>
<div class="hl" style="left:212px;top:1623px;width:806px"></div>
<div class="ck" style="top:1494px"></div><span class="t n" style="left:249px;top:1502px">2025</span><span class="t" style="left:291px;top:1500px">Tvorba webové stránky</span>
<div class="bd" style="left:692px;top:1493px;width:88px;background:#83c340">Programovací práce</div>
<span class="t n" style="left:799px;top:1502px">22-05-2024</span><span class="t n" style="left:875px;top:1502px;color:#e4567e">12-06-2024</span><span class="t k" style="left:950px;top:1502px">Ke schválení</span>
<div class="ck" style="top:1529px"></div><span class="t n" style="left:249px;top:1536px">2094</span><span class="t" style="left:291px;top:1536px">Editace č.1</span>
<span class="t n" style="left:799px;top:1536px">11-06-2024</span><span class="t n" style="left:875px;top:1536px;color:#e4567e">12-06-2024</span><span class="t k" style="left:950px;top:1536px">Ke schválení</span>
<div class="ck" style="top:1564px"></div><span class="t n" style="left:249px;top:1571px">2035</span><span class="t" style="left:291px;top:1571px">Grafický návrh dle šablony</span>
<div class="bd" style="left:715px;top:1563px;width:65px;background:#2e97d8">Grafické práce</div>
<span class="t n" style="left:799px;top:1571px">24-05-2024</span><span class="t n" style="left:875px;top:1571px;color:#e4567e">31-05-2024</span><span class="t k" style="left:950px;top:1571px">Probíhá</span>
<div class="ck" style="top:1599px"></div><span class="t n" style="left:249px;top:1606px">1956</span><span class="t" style="left:291px;top:1606px">úprava webu</span>
<span class="t n" style="left:799px;top:1606px">03-05-2024</span><span class="t n" style="left:875px;top:1606px;color:#e4567e">03-05-2024</span><span class="t k" style="left:950px;top:1606px">Ke schválení</span>
<div class="ck" style="top:1635px"></div><span class="t n" style="left:249px;top:1641px">1898</span><span class="t" style="left:291px;top:1640px">Grafický návrh pro web</span>
<div class="bd" style="left:715px;top:1633px;width:65px;background:#2e97d8">Grafické práce</div>
<span class="t n" style="left:799px;top:1641px">15-04-2024</span><span class="t n" style="left:875px;top:1641px;color:#e4567e">29-04-2024</span><span class="t k" style="left:950px;top:1641px">Probíhá</span>
</div>

<!-- note -->
<svg class="i" style="left:1045px;top:1371px;width:13px;height:13px;color:#5c6770"><use href="#book"/></svg>
<span class="t h" style="left:1063px;top:1377px">Připnutá poznámka (Soukromá)</span>
<div class="a" style="left:1397px;top:1605px;width:38px;height:38px;border-radius:50%;background:#fff;box-shadow:0 2px 6px rgba(0,0,0,.18)"></div>
<svg class="i" style="left:1409px;top:1617px;width:14px;height:14px;color:#444c53"><use href="#msg"/></svg>
</body></html>
